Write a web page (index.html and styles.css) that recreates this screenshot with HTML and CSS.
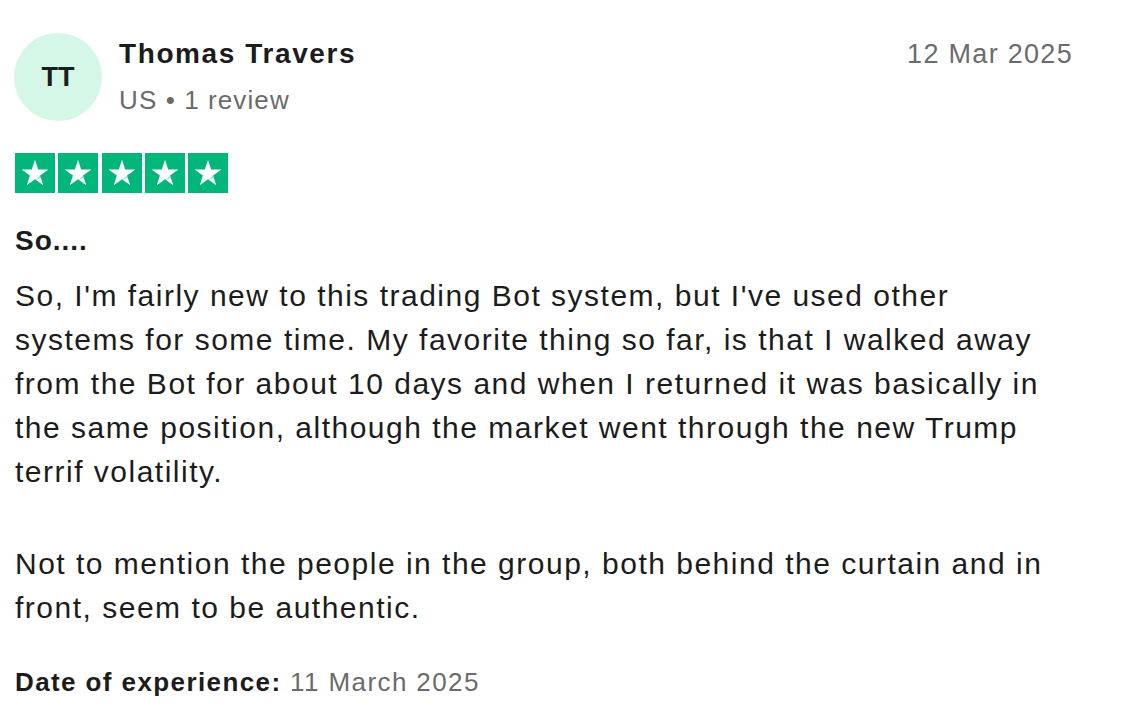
FILE: index.html
```html
<!DOCTYPE html>
<html>
<head>
<meta charset="utf-8">
<link rel="stylesheet" href="styles.css">
</head>
<body>
<article class="review">
  <header class="head">
    <div class="avatar">TT</div>
    <div class="who">
      <div class="name">Thomas Travers</div>
      <div class="meta">US • 1 review</div>
    </div>
    <time class="date">12 Mar 2025</time>
  </header>
  <div class="stars">
    <span class="star"><svg viewBox="0 0 24 24"><path d="M12 3.2l2.1 6.5h6.8l-5.5 4 2.1 6.5-5.5-4-5.5 4 2.1-6.5-5.5-4h6.8z" fill="#fff"/><path d="M15.5 13.7l.55 1.7-4.05 1.2z" fill="#00b67a" opacity=".35"/></svg></span>
    <span class="star"><svg viewBox="0 0 24 24"><path d="M12 3.2l2.1 6.5h6.8l-5.5 4 2.1 6.5-5.5-4-5.5 4 2.1-6.5-5.5-4h6.8z" fill="#fff"/><path d="M15.5 13.7l.55 1.7-4.05 1.2z" fill="#00b67a" opacity=".35"/></svg></span>
    <span class="star"><svg viewBox="0 0 24 24"><path d="M12 3.2l2.1 6.5h6.8l-5.5 4 2.1 6.5-5.5-4-5.5 4 2.1-6.5-5.5-4h6.8z" fill="#fff"/><path d="M15.5 13.7l.55 1.7-4.05 1.2z" fill="#00b67a" opacity=".35"/></svg></span>
    <span class="star"><svg viewBox="0 0 24 24"><path d="M12 3.2l2.1 6.5h6.8l-5.5 4 2.1 6.5-5.5-4-5.5 4 2.1-6.5-5.5-4h6.8z" fill="#fff"/><path d="M15.5 13.7l.55 1.7-4.05 1.2z" fill="#00b67a" opacity=".35"/></svg></span>
    <span class="star"><svg viewBox="0 0 24 24"><path d="M12 3.2l2.1 6.5h6.8l-5.5 4 2.1 6.5-5.5-4-5.5 4 2.1-6.5-5.5-4h6.8z" fill="#fff"/><path d="M15.5 13.7l.55 1.7-4.05 1.2z" fill="#00b67a" opacity=".35"/></svg></span>
  </div>
  <h2 class="title">So....</h2>
  <div class="body">
    <p class="text">So, I'm fairly new to this trading Bot system, but I've used other systems for some time. My favorite thing so far, is that I walked away from the Bot for about 10 days and when I returned it was basically in the same position, although the market went through the new Trump terrif volatility.</p>
    <p class="text">Not to mention the people in the group, both behind the curtain and in front, seem to be authentic.</p>
  </div>
  <p class="exp"><b>Date of experience:</b> 11 March 2025</p>
</article>
</body>
</html>
```

FILE: styles.css
```css
html, body {
  margin: 0;
  padding: 0;
  background: #fff;
}
body {
  font-family: "Liberation Sans", Arial, sans-serif;
  color: #1c1c1c;
}
.review {
  width: 1058px;
  padding: 33px 0 0 15px;
}
.head {
  display: flex;
  align-items: flex-start;
}
.avatar {
  width: 88px;
  height: 88px;
  border-radius: 50%;
  background: #d4f7e8;
  margin-left: -1px;
  display: flex;
  align-items: center;
  justify-content: center;
  font-weight: 700;
  font-size: 27px;
  color: #1c1c1c;
}
.who {
  margin-left: 17px;
  flex: 1;
}
.name {
  font-weight: 700;
  font-size: 28px;
  line-height: 40px;
  letter-spacing: 1.6px;
  margin-top: 1px;
}
.meta {
  font-size: 26px;
  line-height: 40px;
  letter-spacing: 1.1px;
  color: #6b6b6b;
  margin-top: 6px;
}
.date {
  font-size: 27px;
  line-height: 40px;
  letter-spacing: 1.3px;
  color: #6b6b6b;
  margin-top: 1px;
}
.stars {
  display: flex;
  gap: 3.3px;
  margin-top: 32px;
}
.star {
  width: 40px;
  height: 40px;
  background: #00b67a;
  display: flex;
  align-items: center;
  justify-content: center;
}
.star svg {
  width: 36px;
  height: 36px;
}
.title {
  font-size: 28px;
  font-weight: 700;
  line-height: 40px;
  letter-spacing: 1px;
  margin: 28px 0 0;
}
.body {
  width: 1030px;
  margin-top: 13px;
}
.text {
  font-size: 30px;
  line-height: 44px;
  letter-spacing: 1.5px;
  margin: 0;
}
.text + .text {
  margin-top: 48px;
}
.exp {
  font-size: 26px;
  line-height: 36px;
  letter-spacing: 1.4px;
  margin: 34px 0 0;
  color: #6b6b6b;
}
.exp b {
  color: #1c1c1c;
}
```
